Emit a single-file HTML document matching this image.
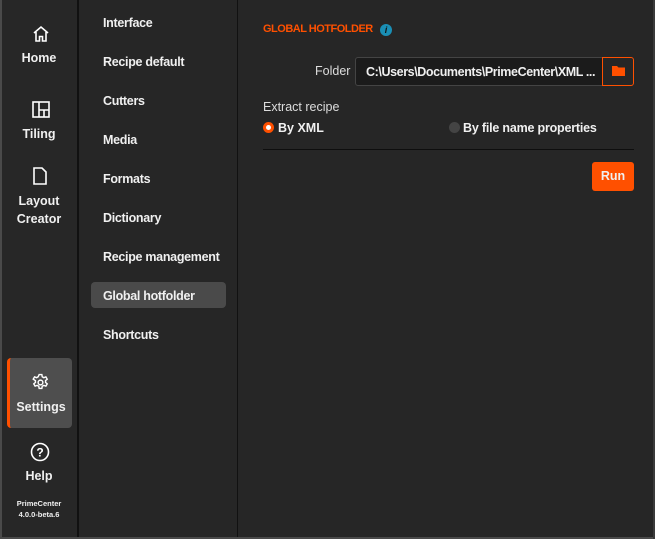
<!DOCTYPE html>
<html><head><style>
*{margin:0;padding:0;box-sizing:border-box}
body{width:655px;height:539px;background:#262626;font-family:"Liberation Sans",sans-serif;color:#f0f0f0;position:relative;overflow:hidden;font-size:12.5px}
.abs{position:absolute}
.rail{left:0;top:0;width:78px;height:539px;background:#272727;border-left:2px solid #4a4a4a;border-bottom:2px solid #4a4a4a}
.vl{width:2px;background:#111;top:0;height:539px}
.ri{position:absolute;left:0;width:78px;text-align:center;font-size:12.5px;font-weight:bold;line-height:18px}
.mi{position:absolute;left:103px;font-size:12.5px;font-weight:bold;letter-spacing:-0.3px}
</style></head><body>
<div class="abs rail"></div>
<div class="abs vl" style="left:77px"></div>
<div class="abs vl" style="left:237px;width:1px"></div>
<div class="abs" style="left:0;top:537px;width:655px;height:2px;background:#4a4a4a"></div>
<div class="abs" style="left:653px;top:0;width:2px;height:539px;background:#3a3a3a"></div>

<svg class="abs" style="left:32px;top:25px" width="18" height="18" viewBox="0 0 18 18" fill="none" stroke="#fff" stroke-width="1.6"><path d="M2 8L9 2l7 6M4 7v9h3.5v-4.5h3V16H14V7"/></svg>
<div class="ri" style="top:49px">Home</div>
<svg class="abs" style="left:32px;top:101px" width="18" height="17" viewBox="0 0 18 17" fill="none" stroke="#fff" stroke-width="1.6"><rect x="1" y="1" width="16" height="15"/><path d="M7 1v15M7 9h10M12 9v7"/></svg>
<div class="ri" style="top:125px">Tiling</div>
<svg class="abs" style="left:33px;top:167px" width="14" height="18" viewBox="0 0 14 18" fill="none" stroke="#fff" stroke-width="1.6"><path d="M1 1h8l4 4v12H1z"/></svg>
<div class="ri" style="top:192px">Layout<br>Creator</div>

<div class="abs" style="left:7px;top:358px;width:65px;height:70px;background:#4e4e4e;border-radius:4px;border-left:3px solid #ff5000"></div>
<svg class="abs" style="left:31px;top:373px" width="19" height="19" viewBox="0 0 24 24" fill="none" stroke="#fff" stroke-width="1.8"><circle cx="12" cy="12" r="3"/><path d="M10.3 2h3.4l.5 2.8 2 1.1 2.6-1 1.7 2.9-2.1 1.8v2.3l2.1 1.8-1.7 2.9-2.6-1-2 1.1-.5 2.8h-3.4l-.5-2.8-2-1.1-2.6 1-1.7-2.9 2.1-1.8V9.6L2.8 7.8l1.7-2.9 2.6 1 2-1.1z"/></svg>
<div class="ri" style="top:398px;left:2px">Settings</div>
<svg class="abs" style="left:30px;top:442px" width="20" height="20" viewBox="0 0 20 20"><circle cx="10" cy="10" r="8.5" fill="none" stroke="#fff" stroke-width="1.6"/><text x="10" y="14.5" text-anchor="middle" fill="#fff" font-size="12" font-weight="bold" font-family="Liberation Sans">?</text></svg>
<div class="ri" style="top:467px">Help</div>
<div class="ri" style="top:498px;font-size:7.5px;line-height:11px">PrimeCenter<br>4.0.0-beta.6</div>

<div class="mi" style="top:16px">Interface</div>
<div class="mi" style="top:55px">Recipe default</div>
<div class="mi" style="top:94px">Cutters</div>
<div class="mi" style="top:133px">Media</div>
<div class="mi" style="top:172px">Formats</div>
<div class="mi" style="top:211px">Dictionary</div>
<div class="mi" style="top:250px">Recipe management</div>
<div class="abs" style="left:91px;top:282px;width:135px;height:26px;background:#4a4a4a;border-radius:4px"></div>
<div class="mi" style="top:289px">Global hotfolder</div>
<div class="mi" style="top:328px">Shortcuts</div>

<div class="abs" style="left:263px;top:23px;color:#ff5000;font-weight:bold;font-size:11px;letter-spacing:-0.5px">GLOBAL HOTFOLDER</div>
<div class="abs" style="left:380px;top:24px;width:12px;height:12px;border-radius:50%;background:#1a8fb5;color:#111;font-size:9px;font-weight:bold;font-style:italic;text-align:center;line-height:12px">i</div>
<div class="abs" style="left:315px;top:64px;color:#ddd">Folder</div>
<div class="abs" style="left:355px;top:57px;width:248px;height:29px;background:#1b1b1b;border:1px solid #444;border-radius:3px 0 0 3px;padding:7px 0 0 10px;font-weight:bold;letter-spacing:-0.4px;white-space:nowrap">C:\Users\Documents\PrimeCenter\XML ...</div>
<div class="abs" style="left:602px;top:57px;width:32px;height:29px;border:1px solid #ff5000;border-radius:0 3px 3px 0"></div>
<svg class="abs" style="left:612px;top:65px" width="13" height="11" viewBox="0 0 13 11"><path d="M0 1h5l1.5 1.5H13V11H0z" fill="#ff5000"/></svg>
<div class="abs" style="left:263px;top:100px;color:#ddd">Extract recipe</div>
<div class="abs" style="left:263px;top:122px;width:11px;height:11px;border-radius:50%;background:#ff5000"></div>
<div class="abs" style="left:266px;top:125px;width:5px;height:5px;border-radius:50%;background:#fff"></div>
<div class="abs" style="left:278px;top:121px;font-weight:bold">By XML</div>
<div class="abs" style="left:449px;top:122px;width:11px;height:11px;border-radius:50%;background:#444"></div>
<div class="abs" style="left:463px;top:121px;font-weight:bold;letter-spacing:-0.2px">By file name properties</div>
<div class="abs" style="left:263px;top:149px;width:371px;height:1px;background:#0e0e0e"></div>
<div class="abs" style="left:592px;top:162px;width:42px;height:29px;background:#ff5000;border-radius:3px;font-weight:bold;text-align:center;line-height:29px">Run</div>
</body></html>
